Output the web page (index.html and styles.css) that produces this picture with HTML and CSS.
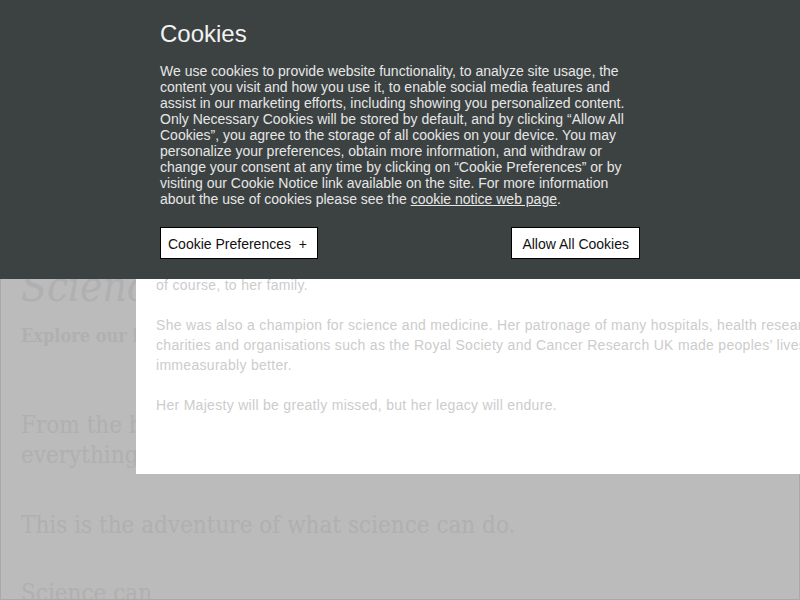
FILE: index.html
```html
<!DOCTYPE html>
<html lang="en">
<head>
<meta charset="utf-8">
<title>Science can</title>
<link rel="stylesheet" href="styles.css">
</head>
<body>
<div class="page">
  <h1 class="hero-title">Science can</h1>
  <p class="hero-sub">Explore our latest stories</p>
  <p class="lead">From the birth of the universe to the cells in our bodies,<br>everything we know is thanks to science.</p>
  <p class="lead">This is the adventure of what science can do.</p>
  <p class="lead lead-last">Science can</p>
</div>

<div class="modal">
  <p>We are deeply saddened by the death of Her Majesty Queen Elizabeth II.<br>Throughout her long reign she showed unwavering devotion to duty and to service,<br>of course, to her family.</p>
  <p>She was also a champion for science and medicine. Her patronage of many hospitals, health research<br>charities and organisations such as the Royal Society and Cancer Research UK made peoples’ lives<br>immeasurably better.</p>
  <p>Her Majesty will be greatly missed, but her legacy will endure.</p>
</div>

<div class="cookie-banner">
  <div class="cookie-inner">
    <h2 class="cookie-title">Cookies</h2>
    <p class="cookie-text">We use cookies to provide website functionality, to analyze site usage, the content you visit and how you use it, to enable social media features and assist in our marketing efforts, including showing you personalized content. Only Necessary Cookies will be stored by default, and by clicking “Allow All Cookies”, you agree to the storage of all cookies on your device. You may personalize your preferences, obtain more information, and withdraw or change your consent at any time by clicking on “Cookie Preferences” or by visiting our Cookie Notice link available on the site. For more information about the use of cookies please see the <a href="#" class="cookie-link">cookie notice web page</a>.</p>
    <div class="cookie-actions">
      <button class="btn btn-prefs">Cookie Preferences <span class="plus">+</span></button>
      <button class="btn btn-allow">Allow All Cookies</button>
    </div>
  </div>
</div>
</body>
</html>
```

FILE: styles.css
```css
html, body {
  margin: 0;
  padding: 0;
  height: 600px;
  overflow: hidden;
}

body {
  position: relative;
  font-family: "Liberation Sans", Arial, sans-serif;
}

.page {
  box-sizing: border-box;
  height: 600px;
  background: #bbbbbb;
  border: 1px solid #a9a9a9;
  padding: 0 20px;
  color: #b0b0b0;
  font-family: "DejaVu Serif", serif;
  overflow: hidden;
}

.hero-title {
  margin: 258px 0 0;
  font-size: 42px;
  font-style: italic;
  font-weight: normal;
  line-height: 56px;
  font-stretch: condensed;
}

.hero-sub {
  margin: 9px 0 0;
  font-size: 18px;
  line-height: 24px;
  font-weight: bold;
  font-stretch: condensed;
}

.lead {
  margin: 62px 0 0;
  font-size: 24px;
  line-height: 30px;
  font-stretch: condensed;
}

.lead + .lead {
  margin-top: 40px;
}

.lead + .lead-last {
  margin-top: 38px;
}

.modal {
  position: absolute;
  left: 136px;
  top: 215px;
  width: 800px;
  height: 259px;
  box-sizing: border-box;
  padding: 20px;
  background: #ffffff;
  color: #cccccc;
  font-size: 14px;
  line-height: 20px;
  letter-spacing: 0.3px;
  white-space: nowrap;
}

.modal p {
  margin: 0 0 20px;
}

.cookie-banner {
  position: absolute;
  left: 0;
  top: 0;
  width: 800px;
  height: 279px;
  box-sizing: border-box;
  background: #3c4242;
  color: #e6e6e6;
  padding: 20px 0 0 160px;
}

.cookie-inner {
  width: 480px;
}

.cookie-title {
  margin: 0;
  font-size: 24px;
  font-weight: normal;
  line-height: 28px;
  color: #f2f2f2;
}

.cookie-text {
  margin: 15px 0 0;
  font-size: 14px;
  line-height: 16px;
}

.cookie-link {
  color: #e6e6e6;
  text-decoration: underline;
}

.cookie-actions {
  display: flex;
  justify-content: space-between;
  margin-top: 20px;
}

.btn {
  height: 32px;
  box-sizing: border-box;
  background: #ffffff;
  color: #111111;
  border: 1px solid #000000;
  font-family: "Liberation Sans", Arial, sans-serif;
  font-size: 14px;
  line-height: 16px;
  padding: 1px 10px 0;
  margin: 0;
  border-radius: 0;
}

.btn-prefs {
  padding: 1px 10px 0 7px;
}

.plus {
  margin-left: 4px;
}
```
